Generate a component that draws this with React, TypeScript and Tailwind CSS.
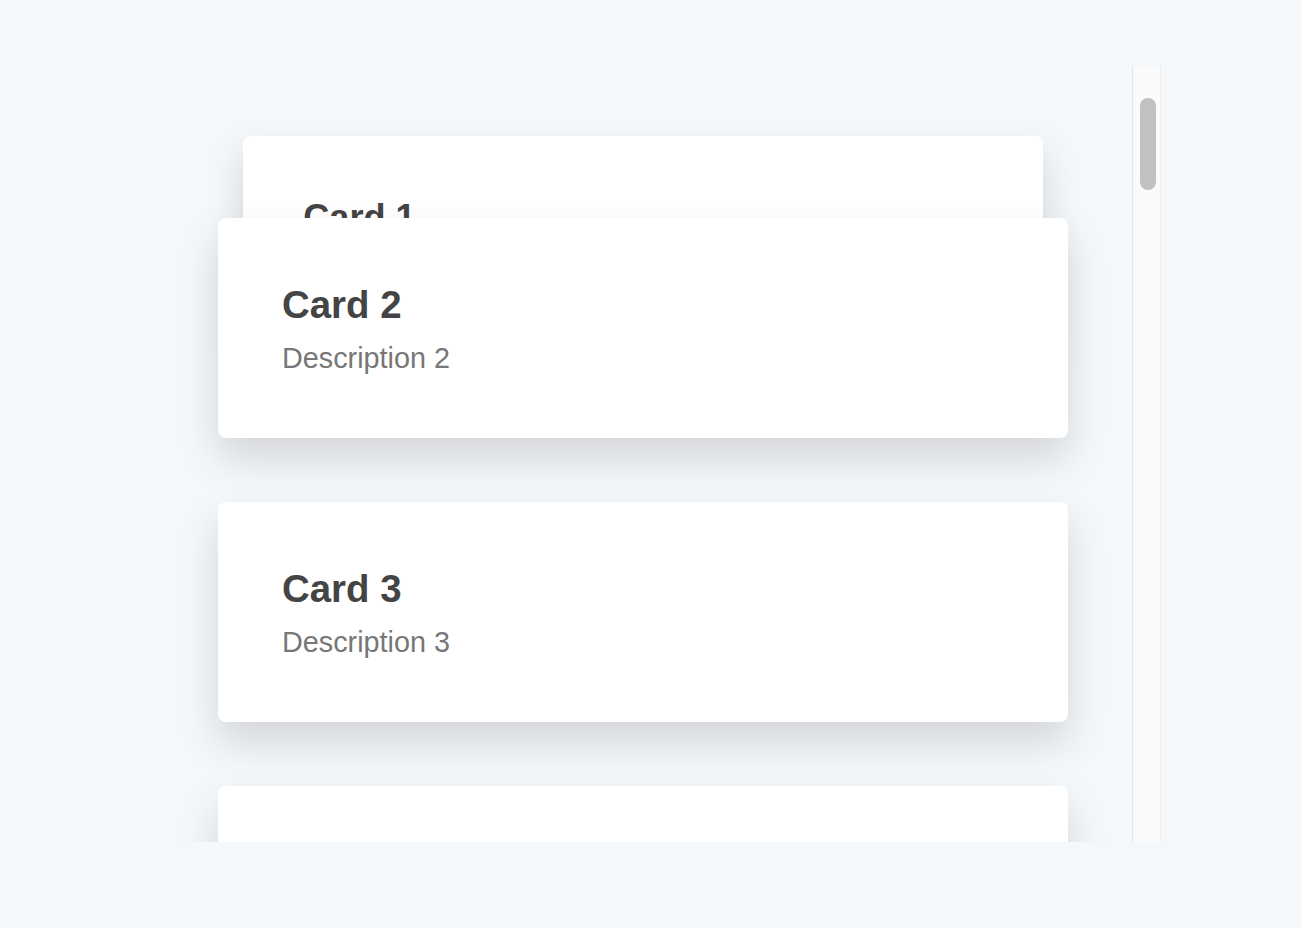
import React from "react";

const cards = [
  { id: 1, title: "Card 1", text: "Description 1" },
  { id: 2, title: "Card 2", text: "Description 2" },
  { id: 3, title: "Card 3", text: "Description 3" },
  { id: 4, title: "Card 4", text: "Description 4" },
];

function Card({ title, text, className = "" }: { title: string; text: string; className?: string }) {
  return (
    <div
      className={`h-[220px] w-[850px] shrink-0 rounded-lg bg-white px-16 pt-[68px] shadow-[0_20px_40px_rgba(0,0,0,0.14)] ${className}`}
    >
      <h2 className="text-[38.4px] font-bold leading-none text-[#444]">{title}</h2>
      <p className="mt-5 text-[28.8px] leading-none text-[#777]">{text}</p>
    </div>
  );
}

export default function App() {
  return (
    <div
      className="min-h-[928px] bg-[#f5f8fb] pt-[66px]"
      style={{ fontFamily: '"Liberation Sans", Arial, sans-serif' }}
    >
      <div className="ml-[154px] flex h-[776px] w-[1007px]">
        {/* scroll area */}
        <div className="flex flex-1 flex-col items-center overflow-hidden pt-[70px]">
          <Card title={cards[0].title} text={cards[0].text} className="origin-top scale-[0.9412]" />
          <Card title={cards[1].title} text={cards[1].text} className="relative z-10 -mt-[138px]" />
          <Card title={cards[2].title} text={cards[2].text} className="relative z-10 mt-16" />
          <Card title={cards[3].title} text={cards[3].text} className="relative z-10 mt-16" />
        </div>

        {/* fake scrollbar */}
        <div className="w-[29px] shrink-0 border-x border-l-[#e6e6e6] border-r-[#ececec] bg-[#fafafa]">
          <div className="ml-[7px] mt-[32px] h-[92px] w-4 rounded-full bg-[#c1c1c1]" />
        </div>
      </div>
    </div>
  );
}
